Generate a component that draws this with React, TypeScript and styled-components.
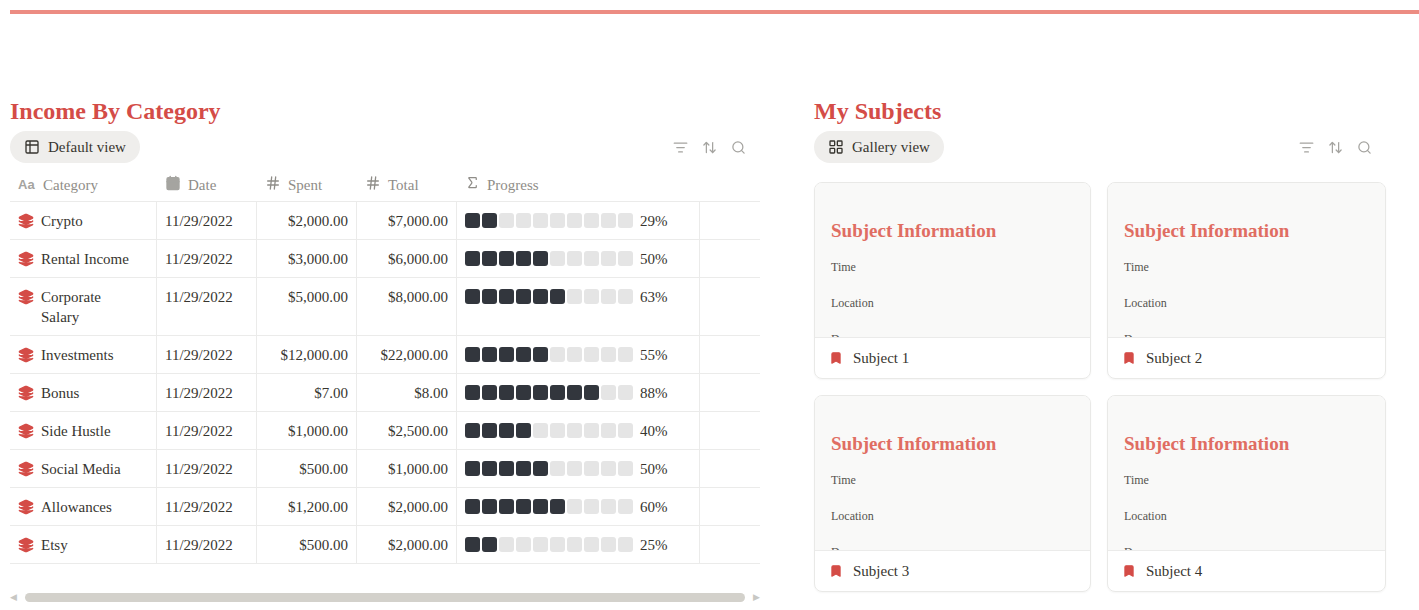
import React from "react";
import styled, { createGlobalStyle } from "styled-components";
import { ListFilter, ArrowUpDown, Search, Calendar, Hash, Sigma, Table2, LayoutGrid, Layers, Bookmark } from "lucide-react";

const Global = createGlobalStyle`
  body { margin: 0; background: #fff; font-family: "Liberation Serif", "DejaVu Serif", serif; color: #37352f; }
`;

const Page = styled.div`
  padding: 10px 0 0 10px;
`;
const TopLine = styled.div`
  height: 4px; background: #ec8c82;
`;
const Columns = styled.div`
  display: flex; gap: 54px; margin-top: 80px;
`;
const Section = styled.div<{ $w: number }>`
  width: ${p => p.$w}px; flex-shrink: 0;
`;
const Title = styled.h2`
  margin: 0; font-size: 24px; font-weight: 700; color: #d44c47; line-height: 34px;
`;
const Toolbar = styled.div`
  display: flex; align-items: center; justify-content: space-between; height: 34px; margin-top: 2px; padding-right: 14px;
`;
const ViewPill = styled.div`
  display: flex; align-items: center; gap: 8px; background: #efeeec; border-radius: 16px;
  height: 32px; padding: 0 14px; font-size: 15px; color: #37352f;
`;
const Tools = styled.div`
  display: flex; gap: 14px; color: #a5a4a0;
`;
const Table = styled.div`
  margin-top: 5px; width: 750px;
`;
const Row = styled.div<{ $head?: boolean }>`
  display: grid; grid-template-columns: 147px 100px 100px 100px 243px 60px;
  border-bottom: 1px solid #ebebea;
  ${p => p.$head ? "color:#8f8d88;" : ""}
`;
const Cell = styled.div<{ $right?: boolean; $head?: boolean; $last?: boolean }>`
  padding: ${p => (p.$head ? "6px 8px 6px" : "9px 8px 8px")};
  min-height: 20px;
  font-size: 15px; line-height: 20px;
  display: flex; align-items: flex-start; gap: 7px;
  justify-content: ${p => (p.$right ? "flex-end" : "flex-start")};
  border-right: ${p => (p.$head || p.$last ? "none" : "1px solid #ebebea")};
`;
const Aa = styled.span`
  font-family: "Liberation Sans", sans-serif; font-weight: 700; font-size: 13px; color: #a5a4a0; width: 18px;
`;
const Bar = styled.div`
  display: flex; gap: 2px; margin-top: 2px; margin-right: 0;
`;
const Seg = styled.div<{ $on: boolean }>`
  width: 15px; height: 15px; border-radius: 3px; background: ${p => (p.$on ? "#32363d" : "#e5e5e5")};
`;
const Scroll = styled.div`
  display: flex; align-items: center; gap: 8px; margin-top: 28px; width: 750px; color: #c8c8c4; font-size: 9px;
`;
const Thumb = styled.div`
  flex: 1; height: 9px; border-radius: 5px; background: #d3d1cb;
`;
const Gallery = styled.div`
  display: grid; grid-template-columns: 277px 279px; gap: 16px; margin-top: 18px;
`;
const Card = styled.div`
  border: 1px solid #e9e9e7; border-radius: 8px; overflow: hidden; box-shadow: 0 1px 2px rgba(0,0,0,0.04);
`;
const Preview = styled.div`
  background: #f9f9f8; height: 155px; overflow: hidden; padding: 37px 16px 0; box-sizing: border-box;
  border-bottom: 1px solid #ebebea;
`;
const PTitle = styled.div`
  color: #e06d62; font-weight: 700; font-size: 19px; margin-bottom: 18px;
`;
const PLine = styled.div`
  font-size: 12px; color: #55534e; height: 36px;
`;
const Footer = styled.div`
  height: 40px; display: flex; align-items: center; gap: 10px; padding: 0 14px; font-size: 15px;
`;

const rows: [string, string, string, number, number][] = [
  ["Crypto", "$2,000.00", "$7,000.00", 2, 29],
  ["Rental Income", "$3,000.00", "$6,000.00", 5, 50],
  ["Corporate Salary", "$5,000.00", "$8,000.00", 6, 63],
  ["Investments", "$12,000.00", "$22,000.00", 5, 55],
  ["Bonus", "$7.00", "$8.00", 8, 88],
  ["Side Hustle", "$1,000.00", "$2,500.00", 4, 40],
  ["Social Media", "$500.00", "$1,000.00", 5, 50],
  ["Allowances", "$1,200.00", "$2,000.00", 6, 60],
  ["Etsy", "$500.00", "$2,000.00", 2, 25],
];

const ToolIcons = () => (
  <Tools>
    <ListFilter size={15} />
    <ArrowUpDown size={15} />
    <Search size={15} />
  </Tools>
);

export default function App() {
  return (
    <Page>
      <Global />
      <TopLine />
      <Columns>
        <Section $w={750}>
          <Title>Income By Category</Title>
          <Toolbar>
            <ViewPill><Table2 size={16} />Default view</ViewPill>
            <ToolIcons />
          </Toolbar>
          <Table>
            <Row $head>
              <Cell $head><Aa>Aa</Aa>Category</Cell>
              <Cell $head><Calendar size={16} fill="#a5a4a0" color="#a5a4a0" />Date</Cell>
              <Cell $head><Hash size={16} />Spent</Cell>
              <Cell $head><Hash size={16} />Total</Cell>
              <Cell $head><Sigma size={15} />Progress</Cell>
              <Cell $head />
            </Row>
            {rows.map(([name, spent, total, n, pct]) => (
              <Row key={name}>
                <Cell><Layers size={16} color="#d44c47" fill="#d44c47" style={{ flexShrink: 0, marginTop: 2 }} /><span style={{ maxWidth: 90 }}>{name}</span></Cell>
                <Cell>11/29/2022</Cell>
                <Cell $right>{spent}</Cell>
                <Cell $right>{total}</Cell>
                <Cell>
                  <Bar>{Array.from({ length: 10 }, (_, i) => <Seg key={i} $on={i < n} />)}</Bar>
                  {pct}%
                </Cell>
                <Cell $last />
              </Row>
            ))}
          </Table>
          <Scroll>◀<Thumb />▶</Scroll>
        </Section>
        <Section $w={572}>
          <Title>My Subjects</Title>
          <Toolbar>
            <ViewPill><LayoutGrid size={16} />Gallery view</ViewPill>
            <ToolIcons />
          </Toolbar>
          <Gallery>
            {[1, 2, 3, 4].map(i => (
              <Card key={i}>
                <Preview>
                  <PTitle>Subject Information</PTitle>
                  <PLine>Time</PLine>
                  <PLine>Location</PLine>
                  <PLine>Days</PLine>
                </Preview>
                <Footer><Bookmark size={14} color="#d44c47" fill="#d44c47" />Subject {i}</Footer>
              </Card>
            ))}
          </Gallery>
        </Section>
      </Columns>
    </Page>
  );
}
